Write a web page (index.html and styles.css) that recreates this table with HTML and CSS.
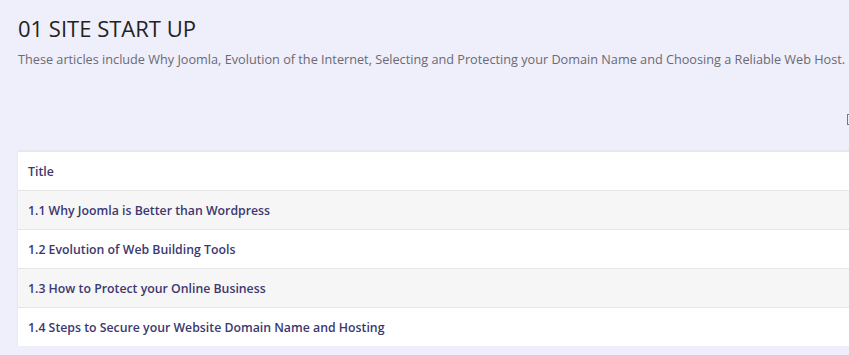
FILE: index.html
```html
<!DOCTYPE html>
<html lang="en">
<head>
  <meta charset="UTF-8" />
  <title>01 Site Start Up</title>
  <link rel="stylesheet" href="styles.css">
</head>
<body>
  <div class="page">
    <h1>01 SITE START UP</h1>
    <p class="desc">These articles include Why Joomla, Evolution of the Internet, Selecting and Protecting your Domain Name and Choosing a Reliable Web Host.</p>
    <div class="toolbar"><span class="toggle"></span></div>
    <table class="articles">
      <thead>
        <tr><th>Title</th></tr>
      </thead>
      <tbody>
        <tr><td><a href="#">1.1 Why Joomla is Better than Wordpress</a></td></tr>
        <tr><td><a href="#">1.2 Evolution of Web Building Tools</a></td></tr>
        <tr><td><a href="#">1.3 How to Protect your Online Business</a></td></tr>
        <tr><td><a href="#">1.4 Steps to Secure your Website Domain Name and Hosting</a></td></tr>
      </tbody>
    </table>
  </div>
</body>
</html>
```

FILE: styles.css
```css
body {
  margin: 0;
  background: #efeefb;
  font-family: 'Open Sans', sans-serif;
  overflow: hidden;
}
.page {
  padding: 14px 0 0 18px;
  width: 860px;
}
h1 {
  margin: 0;
  font-size: 22px;
  font-weight: 400;
  color: #222;
  line-height: 28px;
}
.desc {
  margin: 9px 0 0;
  font-size: 12.7px;
  font-weight: 500;
  color: #6a6a72;
  line-height: 16px;
  white-space: nowrap;
}
.toolbar {
  height: 84px;
  box-sizing: border-box;
  display: flex;
  justify-content: flex-end;
  align-items: flex-start;
  padding-top: 47px;
}
.toggle {
  width: 8px;
  height: 9px;
  border: 1.5px solid #777;
  margin-right: 21px;
}
.articles {
  width: 100%;
  border-collapse: collapse;
  background: #fff;
  box-shadow: 0 0 2px rgba(0,0,0,0.08);
}
.articles th, .articles td {
  text-align: left;
  height: 38px;
  padding: 0 10px;
  font-size: 12.3px;
  border-top: 1px solid #e6e6e6;
}
.articles th {
  font-weight: 600;
  color: #3b3870;
}
.articles tbody tr:nth-child(odd) {
  background: #f6f6f6;
}
.articles a {
  color: #3b3870;
  text-decoration: none;
  font-weight: 600;
}
```
